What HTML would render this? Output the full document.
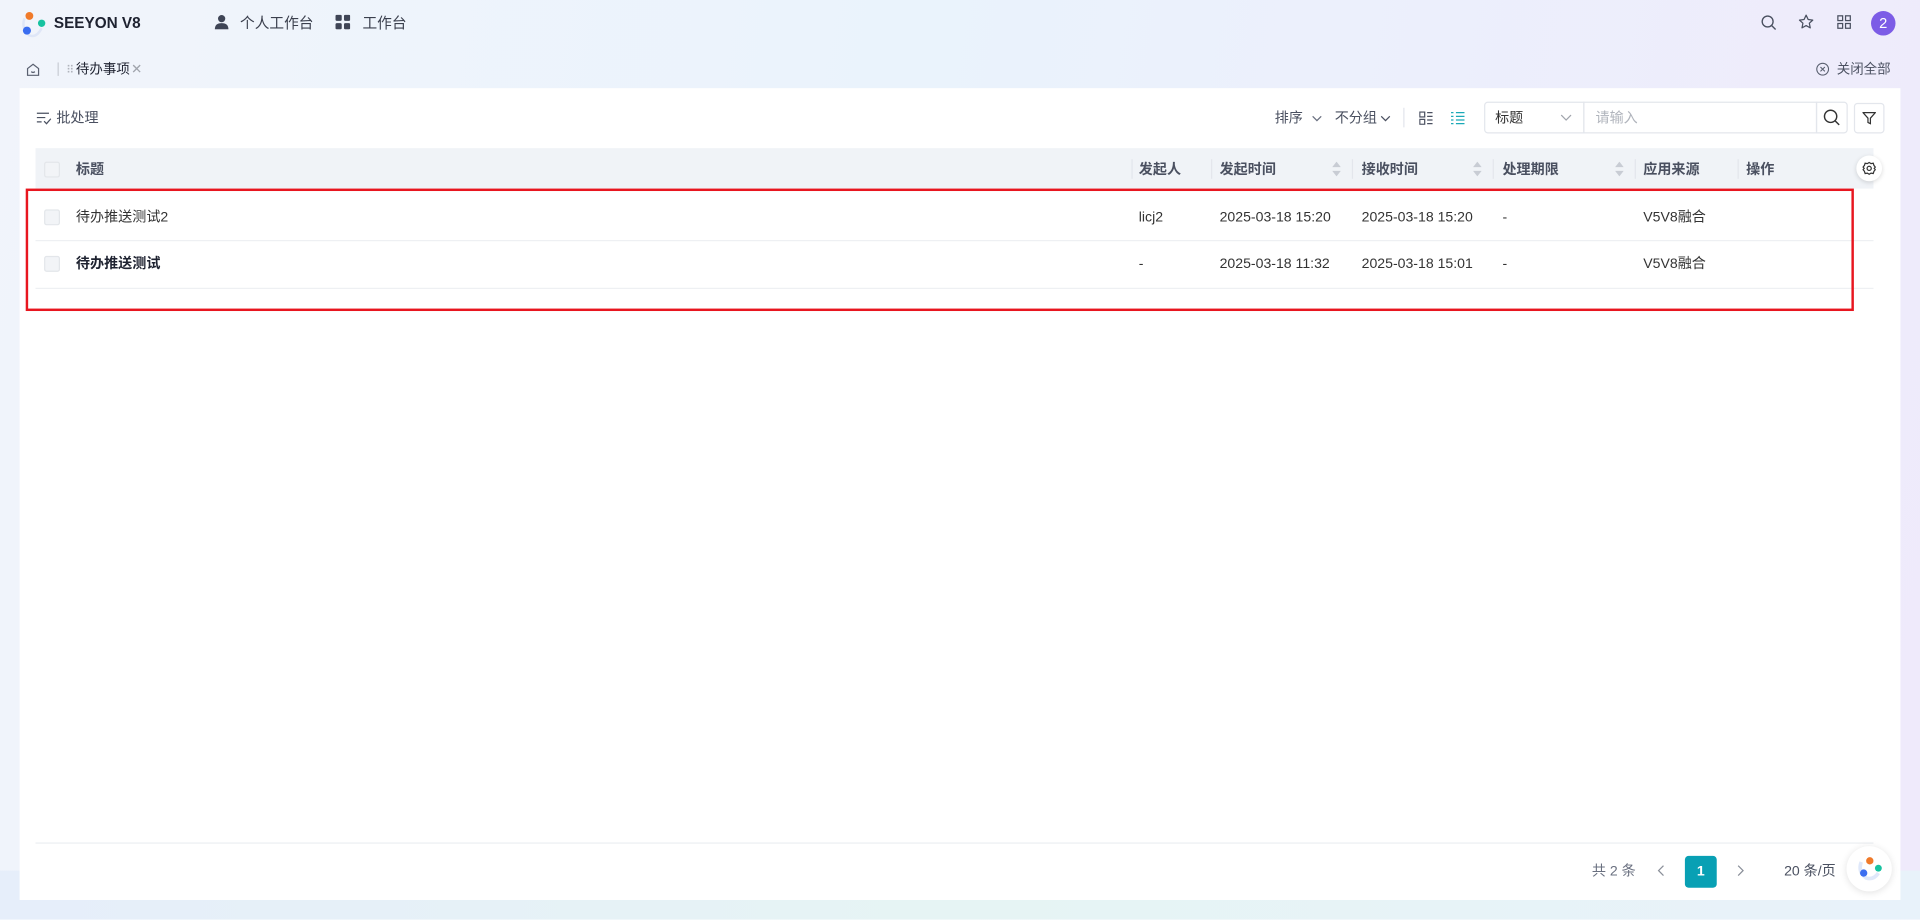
<!DOCTYPE html>
<html><head><meta charset="utf-8"><style>
*{box-sizing:border-box;margin:0;padding:0}
html,body{width:1920px;height:919px;overflow:hidden}
body{font-family:"Liberation Sans","Noto Sans CJK SC",sans-serif;color:#333;}
#s{position:absolute;left:0;top:0;width:1568px;height:751px;transform:scale(1.22449);transform-origin:0 0;
background:linear-gradient(100deg,#f1f4fb 0%,#eaf3fc 45%,#efeafb 100%);overflow:hidden;font-size:11.5px}
#s:after{content:"";position:absolute;left:0;right:0;bottom:0;height:40px;background:linear-gradient(90deg,#e6eefa,#e6f4f4,#e8f2fa);z-index:0}
.a{position:absolute;white-space:nowrap;line-height:18px}
.panel{position:absolute;left:16px;top:72px;width:1536px;height:663px;background:#fff;z-index:1}
.th{color:#4a5060;font-weight:bold}
.dv{position:absolute;top:130px;width:1px;height:16px;background:#e3e6ec}
.srt{position:absolute;width:7px;height:12px}
.cb{position:absolute;width:13px;height:13px;border:1px solid #e3e6ea;background:#f2f4f7;border-radius:2px}
</style></head><body><div id="s">
<svg class="a" style="left:16px;top:9px" width="22" height="22" viewBox="0 0 22 22"><path d="M4 6 Q1 14 8 20 Q14 22 18 14" stroke="#dfe6f7" stroke-width="2" fill="none"/><circle cx="8" cy="4" r="3.2" fill="#f07a2a"/><circle cx="18" cy="10" r="3" fill="#16c2a0"/><circle cx="6" cy="16" r="3.3" fill="#3a6df0"/></svg>
<div class="a" style="left:44px;top:10px;font-weight:bold;font-size:12.5px;color:#1e2230">SEEYON V8</div>
<svg class="a" style="left:175px;top:12px" width="12" height="12" viewBox="0 0 13 13" fill="#3f4556"><circle cx="6.5" cy="3.5" r="3.2"/><path d="M0.5 13 Q0.5 7.5 6.5 7.5 Q12.5 7.5 12.5 13Z"/></svg>
<div class="a" style="left:196px;top:10px;font-size:12px;color:#3a3f4d">个人工作台</div>
<svg class="a" style="left:274px;top:12px" width="12" height="12" viewBox="0 0 13 13" fill="#3f4556"><rect x="0" y="0" width="5.5" height="5.5" rx="1.2"/><rect x="7.5" y="0" width="5.5" height="5.5" rx="1.2"/><rect x="0" y="7.5" width="5.5" height="5.5" rx="1.2"/><rect x="7.5" y="7.5" width="5.5" height="5.5" rx="1.2"/></svg>
<div class="a" style="left:296px;top:10px;font-size:12px;color:#3a3f4d">工作台</div>
<svg class="a" style="left:1438px;top:12px" width="13" height="13" viewBox="0 0 14 14" fill="none" stroke="#4a5060" stroke-width="1.2"><circle cx="6" cy="6" r="4.8"/><path d="M9.5 9.5L13 13"/></svg>
<svg class="a" style="left:1468px;top:11px" width="14" height="14" viewBox="0 0 15 15" fill="none" stroke="#4a5060" stroke-width="1.1"><path d="M7.5 1.5L9.3 5.3 13.3 5.8 10.3 8.5 11.1 12.6 7.5 10.6 3.9 12.6 4.7 8.5 1.7 5.8 5.7 5.3Z" stroke-linejoin="round"/></svg>
<svg class="a" style="left:1500px;top:12px" width="12" height="12" viewBox="0 0 13 13" fill="none" stroke="#4a5060" stroke-width="1.1"><rect x="1" y="1" width="4.2" height="4.2"/><rect x="7.8" y="1" width="4.2" height="4.2"/><rect x="1" y="7.8" width="4.2" height="4.2"/><rect x="7.8" y="7.8" width="4.2" height="4.2"/></svg>
<div class="a" style="left:1528px;top:9px;width:20px;height:20px;border-radius:50%;background:#7c5ce6;color:#fff;font-size:12px;text-align:center;line-height:20px">2</div>
<svg class="a" style="left:21px;top:51px" width="12" height="12" viewBox="0 0 12 12" fill="none" stroke="#5a6070" stroke-width="1"><path d="M1.5 5L6 1.5 10.5 5V10.5H1.5Z"/><path d="M4.5 7.5Q6 8.8 7.5 7.5"/></svg>
<div class="a" style="left:47px;top:51px;width:1px;height:11px;background:#c8ccd4"></div>
<div class="a" style="left:54px;top:48px;color:#b0b4bc;font-size:9px;letter-spacing:-1px">⠿</div>
<div class="a" style="left:62px;top:48px;font-size:11px;color:#1e2230">待办事项</div>
<div class="a" style="left:107px;top:48px;font-size:11px;color:#a0a4ac">✕</div>
<svg class="a" style="left:1483px;top:51px" width="11" height="11" viewBox="0 0 11 11" fill="none" stroke="#5a6070" stroke-width="0.9"><circle cx="5.5" cy="5.5" r="4.8"/><path d="M3.7 3.7L7.3 7.3M7.3 3.7L3.7 7.3"/></svg>
<div class="a" style="left:1500px;top:48px;font-size:11px;color:#4a5060">关闭全部</div>
<div class="panel"></div>
<div class="a" style="left:0;top:0;width:1568px;height:751px;z-index:2">
<svg class="a" style="left:30px;top:91px" width="12" height="11" viewBox="0 0 12 11" fill="none" stroke="#4a5060" stroke-width="1"><path d="M0 1.5H10M0 5H7M0 8.5H4M6 8L8 10 11.5 6"/></svg>
<div class="a" style="left:46px;top:88px;color:#4a5060">批处理</div>
<div class="a" style="left:1041px;top:88px;color:#4a5060">排序</div>
<svg class="a" style="left:1071px;top:94px" width="9" height="6" viewBox="0 0 9 6" fill="none" stroke="#6a7080"><path d="M1 1L4.5 4.5 8 1"/></svg>
<div class="a" style="left:1090px;top:88px;color:#4a5060">不分组</div>
<svg class="a" style="left:1127px;top:94px" width="9" height="6" viewBox="0 0 9 6" fill="none" stroke="#4a5060"><path d="M1 1L4.5 4.5 8 1"/></svg>
<div class="a" style="left:1146px;top:88px;width:1px;height:16px;background:#e3e6ec"></div>
<svg class="a" style="left:1159px;top:91px" width="11" height="11" viewBox="0 0 11 11" fill="none" stroke="#4a5060" stroke-width="1"><rect x="0.5" y="0.5" width="4" height="4"/><rect x="0.5" y="6.5" width="4" height="4"/><path d="M6.5 1H11M6.5 4H11M6.5 7H11M6.5 10H11"/></svg>
<svg class="a" style="left:1185px;top:91px" width="11" height="11" viewBox="0 0 11 11" fill="none" stroke="#1aa9b8" stroke-width="1"><path d="M0 1H2M4 1H11M0 4H2M4 4H11M0 7H2M4 7H11M0 10H2M4 10H11"/></svg>
<div class="a" style="left:1212px;top:83px;width:82px;height:26px;border:1px solid #e3e6ec;border-radius:3px 0 0 3px"></div>
<div class="a" style="left:1221px;top:88px;color:#333">标题</div>
<svg class="a" style="left:1274px;top:93px" width="10" height="6" viewBox="0 0 10 6" fill="none" stroke="#a0a4ac"><path d="M1 1L5 5 9 1"/></svg>
<div class="a" style="left:1293px;top:83px;width:191px;height:26px;border:1px solid #e3e6ec"></div>
<div class="a" style="left:1303px;top:88px;color:#b0b4bc">请输入</div>
<div class="a" style="left:1483px;top:83px;width:26px;height:26px;border:1px solid #e3e6ec;border-radius:0 3px 3px 0"></div>
<svg class="a" style="left:1489px;top:89px" width="14" height="14" viewBox="0 0 14 14" fill="none" stroke="#333" stroke-width="1.2"><circle cx="6" cy="6" r="5"/><path d="M9.7 9.7L13 13"/></svg>
<div class="a" style="left:1514px;top:84px;width:25px;height:25px;border:1px solid #e3e6ec;border-radius:3px"></div>
<svg class="a" style="left:1521px;top:91px" width="11" height="11" viewBox="0 0 11 11" fill="none" stroke="#333" stroke-width="1"><path d="M0.5 1H10.5L6.5 5.5V10L4.5 9V5.5Z"/></svg>
<div class="a" style="left:29px;top:121px;width:1501px;height:33px;background:#f0f3f7"></div>
<div class="cb" style="left:36px;top:132px"></div>
<div class="a th" style="left:62px;top:130px">标题</div>
<div class="dv" style="left:924px"></div><div class="a th" style="left:930px;top:130px">发起人</div>
<div class="dv" style="left:989px"></div><div class="a th" style="left:996px;top:130px">发起时间</div>
<div class="dv" style="left:1104px"></div><div class="a th" style="left:1112px;top:130px">接收时间</div>
<div class="dv" style="left:1219px"></div><div class="a th" style="left:1227px;top:130px">处理期限</div>
<div class="dv" style="left:1335px"></div><div class="a th" style="left:1342px;top:130px">应用来源</div>
<div class="dv" style="left:1419px"></div><div class="a th" style="left:1426px;top:130px">操作</div>
<svg class="srt" style="left:1088px;top:132px" viewBox="0 0 7 12" fill="#c8ccd4"><path d="M3.5 0L7 4.5H0Z"/><path d="M3.5 12L7 7.5H0Z"/></svg>
<svg class="srt" style="left:1203px;top:132px" viewBox="0 0 7 12" fill="#c8ccd4"><path d="M3.5 0L7 4.5H0Z"/><path d="M3.5 12L7 7.5H0Z"/></svg>
<svg class="srt" style="left:1319px;top:132px" viewBox="0 0 7 12" fill="#c8ccd4"><path d="M3.5 0L7 4.5H0Z"/><path d="M3.5 12L7 7.5H0Z"/></svg>
<div class="a" style="left:1516px;top:127px;width:21px;height:21px;border-radius:50%;background:#fff;box-shadow:0 1px 4px rgba(0,0,0,.15)"></div>
<svg class="a" style="left:1521px;top:132px" width="11" height="11" viewBox="0 0 11 11" fill="none" stroke="#333" stroke-width="1"><circle cx="5.5" cy="5.5" r="1.7"/><path d="M5.5 0.7L7 1.6 8.8 1.3 9.4 3.1 10.5 4.5 9.6 5.5 10.5 6.5 9.4 7.9 8.8 9.7 7 9.4 5.5 10.3 4 9.4 2.2 9.7 1.6 7.9 0.5 6.5 1.4 5.5 0.5 4.5 1.6 3.1 2.2 1.3 4 1.6Z"/></svg>
<div class="cb" style="left:36px;top:171px"></div>
<div class="a" style="left:62px;top:169px;color:#333">待办推送测试2</div>
<div class="a" style="left:930px;top:169px">licj2</div>
<div class="a" style="left:996px;top:169px">2025-03-18 15:20</div>
<div class="a" style="left:1112px;top:169px">2025-03-18 15:20</div>
<div class="a" style="left:1227px;top:169px">-</div>
<div class="a" style="left:1342px;top:169px">V5V8融合</div>
<div class="a" style="left:29px;top:196px;width:1501px;height:1px;background:#eef0f3"></div>
<div class="cb" style="left:36px;top:209px"></div>
<div class="a" style="left:62px;top:207px;color:#1e2230;font-weight:bold">待办推送测试</div>
<div class="a" style="left:930px;top:207px">-</div>
<div class="a" style="left:996px;top:207px">2025-03-18 11:32</div>
<div class="a" style="left:1112px;top:207px">2025-03-18 15:01</div>
<div class="a" style="left:1227px;top:207px">-</div>
<div class="a" style="left:1342px;top:207px">V5V8融合</div>
<div class="a" style="left:29px;top:235px;width:1501px;height:1px;background:#eef0f3"></div>
<div class="a" style="left:21px;top:154px;width:1493px;height:100px;border:2px solid #e8161f"></div>
<div class="a" style="left:29px;top:688px;width:1501px;height:1px;background:#eceef1"></div>
<div class="a" style="left:1300px;top:703px;color:#6a7080">共 2 条</div>
<svg class="a" style="left:1353px;top:706px" width="7" height="10" viewBox="0 0 7 10" fill="none" stroke="#8a8f99"><path d="M5.5 1L1.5 5 5.5 9"/></svg>
<div class="a" style="left:1376px;top:699px;width:26px;height:26px;background:#08a0b4;border-radius:3px;color:#fff;text-align:center;line-height:26px;font-weight:bold">1</div>
<svg class="a" style="left:1418px;top:706px" width="7" height="10" viewBox="0 0 7 10" fill="none" stroke="#8a8f99"><path d="M1.5 1L5.5 5 1.5 9"/></svg>
<div class="a" style="left:1457px;top:703px;color:#4a5060">20 条/页</div>
<div class="a" style="left:1508px;top:691px;width:37px;height:37px;border-radius:50%;background:#fff;box-shadow:0 1px 6px rgba(0,0,0,.12)"></div>
<svg class="a" style="left:1515px;top:698px" width="23" height="23" viewBox="0 0 23 23"><path d="M5 6 Q2 14 9 19 Q15 21 19 15" stroke="#dfe8fa" stroke-width="3" fill="none"/><circle cx="12" cy="5" r="3" fill="#f07a2a"/><circle cx="19" cy="11" r="2.8" fill="#16c2a0"/><circle cx="7" cy="15" r="3" fill="#3a6df0"/></svg>
</div>
</div></body></html>
